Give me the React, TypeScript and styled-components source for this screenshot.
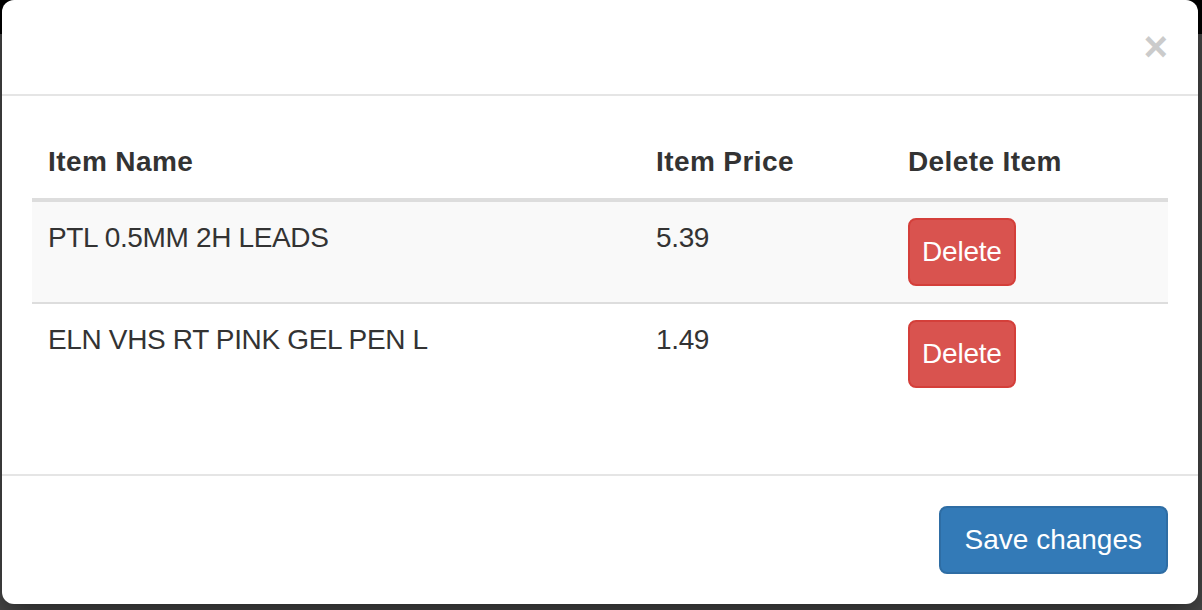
import React from 'react'
import styled, { createGlobalStyle } from 'styled-components'

const GlobalStyle = createGlobalStyle`
  * {
    box-sizing: border-box;
  }

  body {
    margin: 0;
    height: 610px;
    overflow: hidden;
    background: linear-gradient(#000 0, #000 34px, #4b4b4b 34px);
    font-family: 'Liberation Sans', Arial, Helvetica, sans-serif;
    color: #333;
  }
`

interface Item {
  name: string
  price: string
}

const items: Item[] = [
  { name: 'PTL 0.5MM 2H LEADS', price: '5.39' },
  { name: 'ELN VHS RT PINK GEL PEN L', price: '1.49' },
]

const App: React.FC = () => (
  <>
    <GlobalStyle />
    <Modal>
      <Header>
        <Close type="button" aria-label="Close">
          &times;
        </Close>
      </Header>

      <Body>
        <Table>
          <colgroup>
            <col style={{ width: 608 }} />
            <col style={{ width: 252 }} />
            <col style={{ width: 276 }} />
          </colgroup>
          <thead>
            <tr>
              <Th>Item Name</Th>
              <Th>Item Price</Th>
              <Th>Delete Item</Th>
            </tr>
          </thead>
          <tbody>
            {items.map((item, i) => (
              <Row key={item.name} striped={i % 2 === 0}>
                <Td>{item.name}</Td>
                <Td>{item.price}</Td>
                <Td>
                  <DeleteButton type="button">Delete</DeleteButton>
                </Td>
              </Row>
            ))}
          </tbody>
        </Table>
      </Body>

      <Footer>
        <SaveButton type="button">Save changes</SaveButton>
      </Footer>
    </Modal>
  </>
)

const Modal = styled.div`
  width: 1196px;
  margin-left: 2px;
  background: #fff;
  border-radius: 12px;
  box-shadow: 0 10px 30px rgba(0, 0, 0, 0.5);
  overflow: hidden;
`

const Header = styled.div`
  height: 96px;
  padding: 26px 30px 0;
  border-bottom: 2px solid #e5e5e5;
  display: flex;
  justify-content: flex-end;
  align-items: flex-start;
`

const Close = styled.button`
  padding: 0;
  border: 0;
  background: transparent;
  font-family: 'Liberation Sans', Arial, sans-serif;
  font-size: 42px;
  font-weight: 700;
  line-height: 1;
  color: #000;
  opacity: 0.2;
  cursor: pointer;
`

const Body = styled.div`
  padding: 30px;
`

const Table = styled.table`
  width: 100%;
  table-layout: fixed;
  border-collapse: collapse;
  border-spacing: 0;
  margin-bottom: 40px;
  font-size: 28px;
  line-height: 40px;
`

const Th = styled.th`
  padding: 16px;
  text-align: left;
  vertical-align: bottom;
  font-weight: 700;
  letter-spacing: 0.4px;
  border-bottom: 4px solid #ddd;
`

const Row = styled.tr<{ striped: boolean }>`
  background: ${(props) => (props.striped ? '#f9f9f9' : 'transparent')};
`

const Td = styled.td`
  padding: 16px;
  vertical-align: top;
  letter-spacing: -0.35px;
  border-top: 2px solid #ddd;
`

const Button = styled.button`
  display: inline-block;
  margin: 0;
  border: 2px solid transparent;
  border-radius: 8px;
  font-family: 'Liberation Sans', Arial, sans-serif;
  font-size: 28px;
  line-height: 40px;
  color: #fff;
  cursor: pointer;
  white-space: nowrap;
`

const DeleteButton = styled(Button)`
  padding: 12px;
  letter-spacing: -0.2px;
  background: #d9534f;
  border-color: #d43f3a;
`

const SaveButton = styled(Button)`
  padding: 12px 24px;
  background: #337ab7;
  border-color: #2e6da4;
`

const Footer = styled.div`
  padding: 30px;
  border-top: 2px solid #e5e5e5;
  display: flex;
  justify-content: flex-end;
`

export default App
